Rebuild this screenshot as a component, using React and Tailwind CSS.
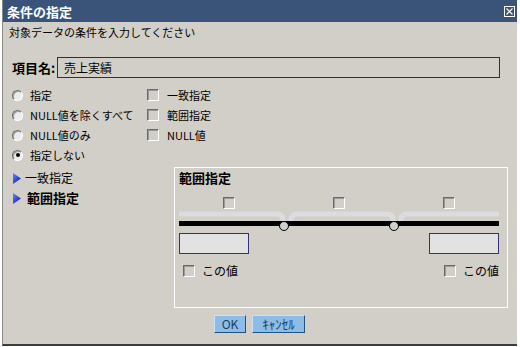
const font = { fontFamily: '"Noto Sans CJK JP", "Noto Sans", sans-serif' };

function CheckBox() {
  return (
    <span className="inline-block h-[12px] w-[12px] shrink-0 border border-t-[#6a6a6a] border-l-[#6a6a6a] border-b-white border-r-white bg-[#d2cfc8] shadow-[inset_1px_1px_0_#9a9a9a]" />
  );
}

function Radio({ checked }) {
  return (
    <span className="relative inline-flex h-[11px] w-[11px] shrink-0 items-center justify-center rounded-full border border-t-[#6a6a6a] border-l-[#6a6a6a] border-b-white border-r-white bg-[#ececec] shadow-[inset_1px_1px_0_#a0a0a0]">
      {checked && <span className="h-[4px] w-[4px] rounded-full bg-black" />}
    </span>
  );
}

function Arrow() {
  return (
    <svg width="8" height="11" viewBox="0 0 8 11" className="shrink-0">
      <defs>
        <linearGradient id="ag" x1="0" y1="0" x2="1" y2="1">
          <stop offset="0" stopColor="#6a86ff" />
          <stop offset="1" stopColor="#0010a8" />
        </linearGradient>
      </defs>
      <polygon points="0,0 8,5.5 0,11" fill="url(#ag)" />
    </svg>
  );
}

function Slider() {
  return (
    <svg width="320" height="24" viewBox="0 0 320 24" className="block">
      <g stroke="#dcdce0" strokeWidth="5" fill="none" strokeLinecap="round">
        <path d="M2 5 H98 Q104 5 104 11" />
        <path d="M112 11 Q112 5 118 5 H208 Q214 5 214 11" />
        <path d="M222 11 Q222 5 228 5 H318" />
      </g>
      <rect x="0" y="12" width="320" height="5" fill="#000" />
      <circle cx="105" cy="17" r="4.5" fill="#cfcfcf" stroke="#000" strokeWidth="1" />
      <circle cx="215" cy="17" r="4.5" fill="#cfcfcf" stroke="#000" strokeWidth="1" />
    </svg>
  );
}

export default function App() {
  const radios = [
    ["指定", false, "一致指定"],
    ["NULL値を除くすべて", false, "範囲指定"],
    ["NULL値のみ", false, "NULL値"],
    ["指定しない", true, null],
  ];

  return (
    <div className="h-[347px] w-[520px] overflow-hidden bg-white text-black" style={font}>
      <div className="ml-[2px] flex h-[346px] w-[515px] flex-col border-b-2 border-l border-b-[#3c3c3c] border-l-[#8a8a8a] bg-[#d2cfc8]">
        <div className="flex h-[22px] items-center justify-between bg-[#3a5379] pl-[4px] pr-[2px]">
          <span className="text-[13px] font-bold leading-none text-white">条件の指定</span>
          <svg width="11" height="11" viewBox="0 0 11 11">
            <rect x="0.5" y="0.5" width="10" height="10" fill="none" stroke="#fff" />
            <path d="M2.5 2.5 L8.5 8.5 M8.5 2.5 L2.5 8.5" stroke="#fff" strokeWidth="1.2" />
          </svg>
        </div>

        <div className="flex h-[20px] items-center pl-[6px] text-[11px]">対象データの条件を入力してください</div>

        <div className="mt-[15px] flex h-[21px] items-center pl-[9px]">
          <span className="w-[45px] text-[13px] font-bold">項目名:</span>
          <div className="flex h-[21px] w-[443px] items-center border border-[#2c2c58] pl-[6px] text-[12px]">売上実績</div>
        </div>

        <div className="mt-[7px] flex flex-col">
          {radios.map(([label, checked, cb]) => (
            <div key={label} className="flex h-[20px] items-center text-[11px]">
              <div className="flex w-[144px] items-center gap-[7px] pl-[9px]">
                <Radio checked={checked} />
                <span>{label}</span>
              </div>
              {cb && (
                <div className="flex items-center gap-[8px]">
                  <CheckBox />
                  <span>{cb}</span>
                </div>
              )}
            </div>
          ))}
        </div>

        <div className="mt-[2px] flex">
          <div className="flex w-[171px] flex-col pt-[1px] pl-[10px]">
            <div className="flex h-[20px] items-center gap-[4px] text-[12px]">
              <Arrow />
              <span>一致指定</span>
            </div>
            <div className="flex h-[20px] items-center gap-[6px] text-[13px] font-bold">
              <Arrow />
              <span>範囲指定</span>
            </div>
          </div>

          <div className="flex h-[141px] w-[334px] flex-col border border-white pl-[4px] pr-[8px]">
            <div className="flex h-[20px] items-center text-[13px] font-bold">範囲指定</div>
            <div className="mt-[9px] flex gap-[98px] pl-[44px]">
              <CheckBox />
              <CheckBox />
              <CheckBox />
            </div>
            <Slider />
            <div className="flex justify-between">
              <div className="h-[21px] w-[70px] border border-[#33336e] bg-[#e2e2e2]" />
              <div className="h-[21px] w-[70px] border border-[#33336e] bg-[#e2e2e2]" />
            </div>
            <div className="mt-[8px] flex justify-between pl-[4px] text-[12px]">
              <div className="flex items-center gap-[7px]">
                <CheckBox />
                <span>この値</span>
              </div>
              <div className="flex items-center gap-[7px]">
                <CheckBox />
                <span>この値</span>
              </div>
            </div>
          </div>
        </div>

        <div className="mt-[7px] flex gap-[6px] pl-[211px]">
          <button className="flex h-[18px] w-[32px] items-center justify-center border border-t-[#c8e2f6] border-l-[#c8e2f6] border-b-[#24527e] border-r-[#24527e] bg-[#8dbde6] text-[12px] text-[#1c3c66]">
            OK
          </button>
          <button className="flex h-[18px] w-[53px] items-center justify-center border border-t-[#c8e2f6] border-l-[#c8e2f6] border-b-[#24527e] border-r-[#24527e] bg-[#8dbde6] text-[13px] text-[#1c3c66]">
            ｷｬﾝｾﾙ
          </button>
        </div>
      </div>
    </div>
  );
}
